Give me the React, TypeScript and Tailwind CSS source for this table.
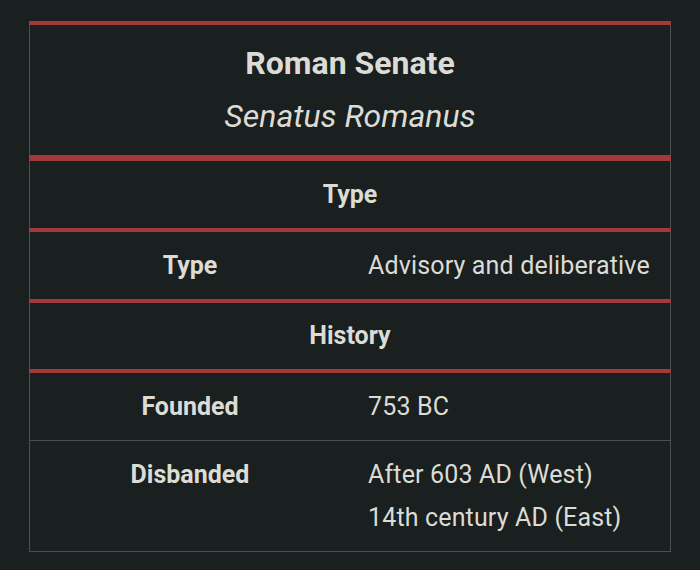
const RedRule = ({ h }: { h: string }) => <div className={`${h} bg-[#a13a38]`} />;

const Header = ({ children, lh }: { children: string; lh: string }) => (
    <div className={`border-x border-[#4a4f4f] py-3 text-center text-[25px] font-bold ${lh}`}>{children}</div>
);

const Row = ({ label, values }: { label: string; values: string[] }) => (
    <div className="grid grid-cols-2 border-x border-[#4a4f4f] py-3 text-[25px] leading-[43px]">
        <div className="text-center font-bold">{label}</div>
        <div className="pl-[18px] tracking-[0.15px]">
            {values.map((v) => (
                <div key={v}>{v}</div>
            ))}
        </div>
    </div>
);

const App = () => {
    return (
        <div className="h-[570px] w-[700px] bg-[#1a1f1f] pt-[21px] text-[#dcdcd6]" style={{ fontFamily: "Roboto, 'Liberation Sans', sans-serif" }}>
            <div className="ml-[29px] w-[642px]">
                <RedRule h="h-[4px]" />
                <div className="border-x border-[#4a4f4f] py-3 text-center text-[32px] leading-[53px]">
                    <div className="font-bold">Roman Senate</div>
                    <div className="italic">Senatus Romanus</div>
                </div>
                <RedRule h="h-[6px]" />
                <Header lh="leading-[43px]">Type</Header>
                <RedRule h="h-[4px]" />
                <Row label="Type" values={["Advisory and deliberative"]} />
                <RedRule h="h-[4px]" />
                <Header lh="leading-[42px]">History</Header>
                <RedRule h="h-[4px]" />
                <Row label="Founded" values={["753 BC"]} />
                <div className="h-px bg-[#4a4f4f]" />
                <div className="border-b border-[#4a4f4f]">
                    <Row label="Disbanded" values={["After 603 AD (West)", "14th century AD (East)"]} />
                </div>
            </div>
        </div>
    );
};

export default App;
